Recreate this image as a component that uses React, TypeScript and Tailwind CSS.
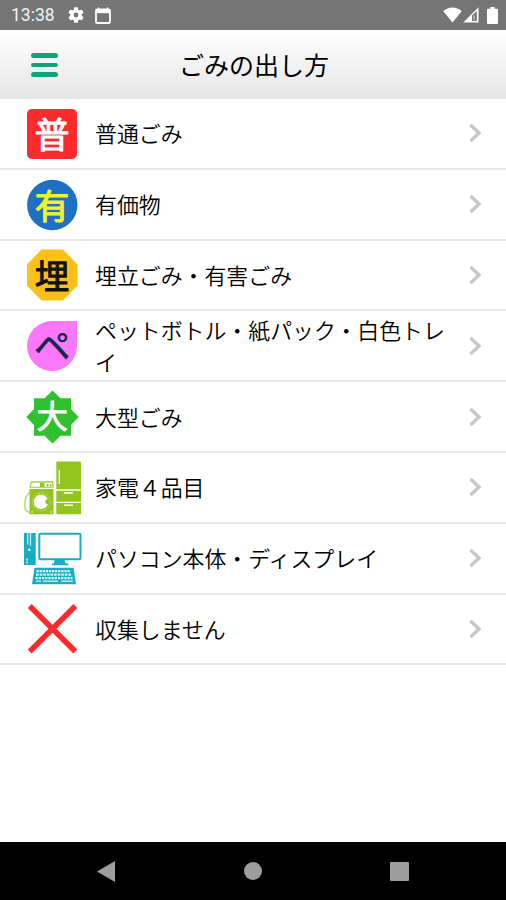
import React from "react";

const glyphFont = '"Noto Sans CJK JP", sans-serif';

const BurnableIcon = () => (
  <svg viewBox="0 0 60 60" className="w-[60px] h-[60px]">
    <rect x="5" y="5" width="50" height="50" rx="5" fill="#fd2a2e" />
    <text x="30" y="43.500" textAnchor="middle" fontSize="35" fontWeight="400" fill="#fff" stroke="#fff" strokeWidth="1" strokeLinejoin="round" fontFamily={glyphFont}>普</text>
  </svg>
);

const ValuableIcon = () => (
  <svg viewBox="0 0 60 60" className="w-[60px] h-[60px]">
    <circle cx="30.300" cy="30" r="25.200" fill="#1f6fc5" />
    <text x="30" y="43.700" textAnchor="middle" fontSize="34.500" fontWeight="400" fill="#eef32b" stroke="#eef32b" strokeWidth="1.100" strokeLinejoin="round" fontFamily={glyphFont}>有</text>
  </svg>
);

const LandfillIcon = () => (
  <svg viewBox="0 0 60 60" className="w-[60px] h-[60px]">
    <path d="M19.500 4.500h21.500L55.500 19.500v21L41 55.500H19.500L5 40.500v-21z" fill="#fcc018" />
    <text x="30" y="43.500" textAnchor="middle" fontSize="34.500" fontWeight="400" fill="#111" stroke="#111" strokeWidth="1" strokeLinejoin="round" fontFamily={glyphFont}>埋</text>
  </svg>
);

const PetBottleIcon = () => (
  <svg viewBox="0 0 60 60" className="w-[60px] h-[60px]">
    <path d="M30 5h25v25a25 25 0 1 1-25-25z" fill="#fb78fb" />
    <text x="30.300" y="43.500" textAnchor="middle" fontSize="36.500" fontWeight="400" fill="#10284c" stroke="#10284c" strokeWidth=".6" strokeLinejoin="round" fontFamily={glyphFont}>ペ</text>
  </svg>
);

const LargeIcon = () => (
  <svg viewBox="0 0 60 60" className="w-[60px] h-[60px]">
    <path d="M30.500 3.500l8 7.800h10.500v10.700l7.700 8-7.700 8v10.700H38.500l-8 7.800-8-7.800H12V38l-7.700-8 7.700-8V11.300h10.500z" fill="#2fc12f" />
    <text x="30.300" y="41" textAnchor="middle" fontSize="31.500" fontWeight="400" fill="#fff" stroke="#fff" strokeWidth=".8" strokeLinejoin="round" fontFamily={glyphFont}>大</text>
  </svg>
);

const ApplianceIcon = () => (
  <svg viewBox="0 0 60 60" className="w-[60px] h-[60px]">
    {/* fridge */}
    <rect x="34.300" y="3.500" width="24.700" height="52.800" rx="1" fill="#92c51d" />
    <path d="M34 32h25M34 44.300h25" stroke="#fff" strokeWidth="1.300" />
    <path d="M37.300 12v14" stroke="#fff" strokeWidth="1.300" />
    <path d="M42 35h9M42 47.200h9" stroke="#fff" strokeWidth="1.400" />
    {/* washer */}
    <path d="M8 34c-5 4-5.500 9-5.200 14 .2 4 2 6 5 6" fill="none" stroke="#b5d86a" strokeWidth="1.400" />
    <rect x="7.500" y="31" width="24" height="25.300" fill="#92c51d" />
    <path d="M8.200 29.500l1-5.500h21.600v5.500z" fill="#fff" stroke="#a3cf3f" strokeWidth="1.300" />
    <path d="M18 25h4.500v4H18zM24.500 26h2v2.500h-2zM28 26h1.500v2.500H28z" fill="#92c51d" />
    <path d="M8 30.300h23.500" stroke="#fff" strokeWidth="1" />
    <circle cx="19.300" cy="43.800" r="9" fill="none" stroke="#bcdc78" strokeWidth="1" strokeDasharray="3 1.200" />
    <circle cx="19" cy="43.800" r="7.300" fill="#fff" />
    <path d="M26.500 41v5.500c-2.300-.3-3.300-1.300-3.300-2.800s1-2.500 3.300-2.700z" fill="#92c51d" />
    <circle cx="10" cy="54" r=".8" fill="#fff" />
    <circle cx="29" cy="54" r=".8" fill="#fff" />
  </svg>
);

const ComputerIcon = () => (
  <svg viewBox="0 0 60 60" className="w-[60px] h-[60px]">
    {/* tower */}
    <path d="M2 4h11.700v32H2z" fill="#18adc3" />
    <path d="M5.700 4v11.500M8.500 4v13" stroke="#c5eaf0" strokeWidth="1.300" />
    <path d="M7.300 19.500v2.500" stroke="#fff" strokeWidth="2" />
    <path d="M5 29.500v5" stroke="#c5eaf0" strokeWidth="1.700" strokeDasharray="2 1" />
    {/* monitor */}
    <rect x="17.300" y="4.800" width="41.200" height="25.400" rx="1.200" fill="#fff" stroke="#18adc3" strokeWidth="2" />
    <path d="M32.500 31h10l1 3.500h2.700v1.800H30v-1.800h2z" fill="#18adc3" />
    {/* keyboard */}
    <path d="M12.500 38.700h39l2.500 16.500H10z" fill="#18adc3" />
    <path d="M14.500 42.200h34" stroke="#e4f6f9" strokeWidth="2.200" strokeDasharray="2.200 .9" />
    <path d="M14 45.700h36" stroke="#cfeef3" strokeWidth="2.300" strokeDasharray="2.700 .9" />
    <path d="M13.500 49.200h37" stroke="#dff4f7" strokeWidth="2.200" strokeDasharray="2.300 .9" />
    <path d="M14 52.300h5m2 0h15m3 0h12" stroke="#bce7ee" strokeWidth="1.400" />
  </svg>
);

const CrossIcon = () => (
  <svg viewBox="0 0 60 60" className="w-[60px] h-[60px]">
    <path d="M7.700 7l45.600 45.500M53.300 7L7.700 52.500" stroke="#fb2a2c" strokeWidth="5.500" />
  </svg>
);

const items = [
  { label: "普通ごみ", Icon: BurnableIcon },
  { label: "有価物", Icon: ValuableIcon },
  { label: "埋立ごみ・有害ごみ", Icon: LandfillIcon },
  { label: "ペットボトル・紙パック・白色トレイ", Icon: PetBottleIcon },
  { label: "大型ごみ", Icon: LargeIcon },
  { label: "家電４品目", Icon: ApplianceIcon },
  { label: "パソコン本体・ディスプレイ", Icon: ComputerIcon },
  { label: "収集しません", Icon: CrossIcon },
];

const StatusBar = () => (
  <div className="h-[30px] shrink-0 bg-[#757575] flex items-center text-white pl-[11px] pr-2">
    <span className="font-[Roboto] text-[17.500px] leading-none w-[44px] whitespace-nowrap pt-0.5 text-[#f2f2f2]">13:38</span>
    <svg viewBox="2 2 20 20" className="w-4 h-4 ml-[13px]" fill="#fff">
      <path d="M19.140 12.940c.04-.3.060-.61.060-.94s-.02-.64-.07-.94l2.030-1.580a.5.5 0 0 0 .12-.61l-1.920-3.320a.5.5 0 0 0-.59-.22l-2.390.96a7 7 0 0 0-1.620-.94l-.36-2.540a.48.48 0 0 0-.48-.41h-3.840a.48.48 0 0 0-.47.41l-.36 2.540c-.59.24-1.130.57-1.620.94l-2.390-.96a.5.5 0 0 0-.59.22L2.740 8.870a.5.5 0 0 0 .12.610l2.030 1.580a6 6 0 0 0 0 1.880l-2.030 1.580a.5.5 0 0 0-.12.610l1.920 3.320c.12.220.37.290.59.220l2.390-.96c.5.380 1.030.7 1.620.94l.36 2.540c.05.240.24.410.48.410h3.840c.24 0 .44-.17.470-.41l.36-2.540a7 7 0 0 0 1.620-.94l2.390.96c.22.080.47 0 .59-.22l1.920-3.320a.5.5 0 0 0-.12-.61zM12 15a3 3 0 1 1 0-6 3 3 0 0 1 0 6z" />
    </svg>
    <svg viewBox="0 0 16 17" className="w-4 h-[17px] ml-[11px]">
      <path d="M3.500.5v3M12.500.5v3" stroke="#fff" strokeWidth="1.600" />
      <rect x="1" y="2.500" width="14" height="13.500" rx="1.300" fill="none" stroke="#fff" strokeWidth="1.800" />
      <path d="M1 2.500h14v3.700H1z" fill="#fff" />
    </svg>
    <div className="ml-auto flex items-center">
      <svg viewBox="0 0 19 16" className="w-[19px] h-4">
        <path d="M.3 4.300C5.500-.7 13.500-.7 18.700 4.300L9.500 15.500z" fill="#fff" />
      </svg>
      <svg viewBox="0 0 16 16" className="w-4 h-4 ml-px">
        <path d="M.3 15.500L15.500.3v15.200z" fill="#fff" />
        <path d="M9 8.500L13.800 4v10H9z" fill="#757575" />
        <path d="M11 8.500v5" stroke="#fff" strokeWidth=".8" />
      </svg>
      <svg viewBox="0 0 11 17" className="w-[11px] h-[17px] ml-2">
        <path d="M3.300 0h4.400v1.800H10a1 1 0 0 1 1 1V16a1 1 0 0 1-1 1H1a1 1 0 0 1-1-1V2.800a1 1 0 0 1 1-1h2.300z" fill="#fff" />
      </svg>
    </div>
  </div>
);

const Header = () => (
  <header className="h-[69px] shrink-0 grid grid-cols-[78px_1fr_76px] items-center bg-linear-to-b from-white to-[#e6e6e6] border-b border-[#e4e4e4]">
    <button className="ml-[31px] mt-0.5 flex w-[27px] flex-col gap-[5px]" aria-label="menu">
      <span className="h-[4.500px] w-full rounded-full bg-[#12a37c]" />
      <span className="h-[4.500px] w-full rounded-full bg-[#12a37c]" />
      <span className="h-[4.500px] w-full rounded-full bg-[#12a37c]" />
    </button>
    <h1 className="text-center text-[25px] leading-none font-normal text-black">ごみの出し方</h1>
  </header>
);

const App = () => {
  return (
    <div className="h-[900px] w-[506px] overflow-hidden bg-white flex flex-col font-['Noto_Sans_CJK_JP',sans-serif]">
      <StatusBar />
      <Header />
      <ul className="flex-1">
        {items.map(({ label, Icon }) => (
          <li key={label} className="h-[70.800px] border-b-2 border-[#e8e8e8] flex items-center pl-[22px] pr-[24px]">
            <div className="shrink-0 pt-px">
              <Icon />
            </div>
            <span className="ml-[13px] w-[360px] text-[21.900px] leading-8 font-[350] text-black">{label}</span>
            <svg viewBox="0 0 14 20" className="ml-auto w-3.5 h-5 shrink-0">
              <path d="M2.500 2l8.500 8-8.500 8" fill="none" stroke="#c7c7c7" strokeWidth="3.400" />
            </svg>
          </li>
        ))}
      </ul>
      <nav className="h-[58px] shrink-0 bg-black flex items-center justify-between pl-[97px] pr-[97px]">
        <svg viewBox="0 0 18 21" className="w-[18px] h-[21px]">
          <path d="M18 0v21L0 10.500z" fill="#9e9e9e" />
        </svg>
        <span className="w-[18px] h-[18px] rounded-full bg-[#9e9e9e]" />
        <span className="w-[19px] h-[19px] rounded-[1px] bg-[#9e9e9e]" />
      </nav>
    </div>
  );
};

export default App;
